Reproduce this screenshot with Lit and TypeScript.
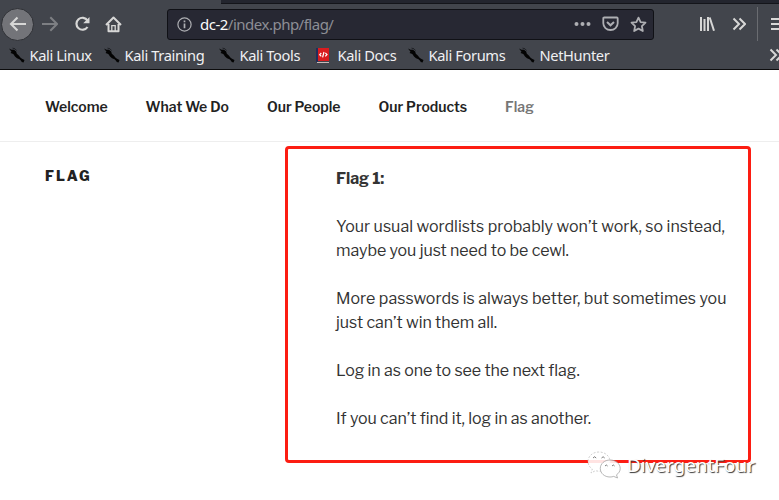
import { LitElement, html, css, svg } from "lit";
import { customElement } from "lit/decorators.js";
import { classMap } from "lit/directives/class-map.js";

const BOOKMARKS = ["Kali Linux", "Kali Training", "Kali Tools", "Kali Docs", "Kali Forums", "NetHunter"];
const PAGES = ["Welcome", "What We Do", "Our People", "Our Products", "Flag"];

const chevrons = svg`<path d="M1.5 2.5 7 8 1.5 13.5M7.5 2.5 13 8 7.5 13.5"/>`;

@customElement("browser-chrome")
class BrowserChrome extends LitElement {
  static styles = css`
    :host { display: flex; flex-direction: column; height: 70px; box-sizing: border-box; background: #42454c; border-bottom: 1px solid #0c0c0d; overflow: hidden; font-family: "Noto Sans", sans-serif; color: #f0f0f2; }
    svg { display: block; fill: none; stroke: #d7d7d6; stroke-width: 2; flex: none; }
    .tabs { height: 4px; margin-left: 221px; box-sizing: border-box; background: #23252e; border-bottom: 1px solid #14151a; flex: none; }
    .bar { display: flex; align-items: center; height: 40px; flex: none; }
    .back { width: 33px; height: 33px; box-sizing: border-box; border-radius: 50%; background: #737479; border: 1px solid #2f3136; display: grid; place-items: center; margin-left: 1px; flex: none; }
    .fwd { margin-left: 8px; opacity: .4; }
    .reload { margin-left: 16px; }
    .home { margin-left: 15px; }
    .url { display: flex; align-items: center; width: 487px; height: 31px; box-sizing: border-box; margin-left: 45px; background: #272833; border: 1px solid #101116; border-radius: 3px; flex: none; padding-left: 9px; }
    .url svg { stroke: #aeafb3; }
    .addr { margin-left: 8px; font-size: 15px; line-height: 20px; color: #8d8e95; flex: 1; white-space: nowrap; letter-spacing: -.5px; }
    .host { color: #fafafa; }
    .dots { margin-right: 11px; }
    .pocket { margin-right: 11px; }
    .star { margin-right: 6px; }
    .lib { margin-left: 45px; }
    .more { margin-left: 17px; }
    .sep { width: 1px; height: 34px; background: #6a6c71; margin-left: 11px; flex: none; }
    .menu { margin-left: 13px; }
    .marks { display: grid; grid-template-columns: 95px 115px 98px 91px 111px 251px 16px; align-items: center; height: 22px; padding-left: 8px; }
    .mark { display: flex; align-items: center; gap: 4px; font-size: 14.67px; line-height: 20px; white-space: nowrap; letter-spacing: -.38px; }
    .mark svg { width: 17px; height: 17px; }
    .mark span { padding-left: .5px; }
  `;
  dragon() {
    return html`<svg viewBox="0 0 17 17"><path d="M1 1.500 3.500 2.800 6 2.800 8.200 4.500 8.800 6.800 10.800 8.600 12.600 10.800 14 11.800 16.500 13 15.500 15.500 13.800 15 12.800 13.500 11.500 12.300 9 11.300 7 9.500 5.300 7 2.500 6 3.500 4.800Z" fill="#030303" stroke="none"/><path d="M4.500 1.100 7 1.800 8.500 3.500" stroke="#1b1d20" stroke-width=".9"/></svg>`;
  }
  docs() {
    return html`<svg viewBox="0 0 17 17"><path d="M0 1h13v13H0z" fill="#d91c1f" stroke="none"/><path d="M0 1h2v14H0z" fill="#222d5b" stroke="none"/><path d="M1 15.500h12" stroke="#c8b9b9" stroke-width="1"/><path d="M5.300 6 3.700 7.700 5.300 9.400M9.300 5.800 11 7.500 9.300 9.300M8 5 6.600 10.300" stroke="#fff" stroke-width="1.200"/></svg>`;
  }
  render() {
    return html`
      <div class="tabs"></div>
      <div class="bar">
        <div class="back"><svg width="18" height="16" viewBox="0 0 18 16"><path d="M17 8H2M8.500 1.500 2 8l6.500 6.500" stroke-width="2.100"/></svg></div>
        <svg class="fwd" width="16" height="16" viewBox="0 0 16 16"><path d="M0 8h14M8.300 1.300 15 8l-6.700 6.700"/></svg>
        <svg class="reload" width="16" height="16" viewBox="0 0 16 16"><path d="M13.500 4.500A6 6 0 1 0 13.500 11" stroke-width="2.200"/><path d="M15.500 1v6.300H9.200Z" fill="#d7d7d6" stroke="none"/></svg>
        <svg class="home" width="17" height="17" viewBox="0 0 17 17"><path d="M1 9 8.500 1.500 16 9M3.500 8v7.300h10V8" stroke-linejoin="round"/><path d="M6.800 15V9.700h3.400V15" stroke-width="1.300"/></svg>
        <div class="url">
          <svg width="15" height="15" viewBox="0 0 15 15"><circle cx="7.500" cy="7.500" r="6.600" stroke-width="1.200"/><path d="M7.500 6.500V11.300M7.500 3.500v1.700" stroke-width="1.700"/></svg>
          <div class="addr"><span class="host">dc-2</span>/index.php/flag/</div>
          <svg class="dots" width="17" height="6" viewBox="0 0 17 6"><g fill="#aeafb3" stroke="none"><circle cx="2.500" cy="3" r="2"/><circle cx="8.500" cy="3" r="2"/><circle cx="14.500" cy="3" r="2"/></g></svg>
          <svg class="pocket" width="17" height="16" viewBox="0 0 17 16"><path d="M2.200 1.500h12.600q.9 0 .9.900v4.900a7.200 6.700 0 0 1-14.400 0V2.400q0-.9.900-.9Z" stroke-width="1.800"/><path d="M5 6l3.500 3.300L12 6" stroke-width="2"/></svg>
          <svg class="star" width="17" height="17" viewBox="0 0 17 17"><path d="m8.500 1.600 2.100 4.500 4.900.6-3.600 3.400.9 4.900-4.300-2.400L4.200 15l.9-4.900-3.600-3.400 4.900-.6Z" stroke-width="1.800" stroke-linejoin="round"/></svg>
        </div>
        <svg class="lib" width="16" height="16" viewBox="0 0 16 16"><path d="M2 1v14M5.500 3v12M9 1v14"/><path d="m10.700 1.500 4.300 13.300"/></svg>
        <svg class="more" width="14" height="16" viewBox="0 0 14 16">${chevrons}</svg>
        <div class="sep"></div>
        <svg class="menu" width="16" height="16" viewBox="0 0 16 16"><path d="M0 3h15M0 8h15M0 13h15"/></svg>
      </div>
      <div class="marks">
        ${BOOKMARKS.map((name) => html`<div class="mark">${name === "Kali Docs" ? this.docs() : this.dragon()}<span>${name}</span></div>`)}
        <svg width="14" height="16" viewBox="0 0 14 16">${chevrons}</svg>
      </div>`;
  }
}

@customElement("app-root")
class AppRoot extends LitElement {
  static styles = css`
    :host { display: block; position: relative; width: 779px; height: 500px; overflow: hidden; background: #fff; font-family: "Libre Franklin", "Liberation Sans", sans-serif; }
    nav { display: flex; gap: 38px; height: 72px; box-sizing: border-box; align-items: center; padding: 2px 0 0 45px; border-bottom: 1px solid #eee; font-size: 14px; font-weight: 600; color: #222; letter-spacing: -.02px; }
    .current { color: #767676; }
    main { display: flex; padding-top: 4px; }
    h2 { margin: 20px 0 0 45px; width: 240px; box-sizing: border-box; font-size: 14px; line-height: 20px; font-weight: 800; letter-spacing: 2.1px; color: #222; flex: none; }
    article { box-sizing: border-box; width: 466px; height: 317px; border: 3px solid #fc1d12; border-radius: 4px; padding: 18px 0 0 48px; font-size: 16px; line-height: 24px; color: #333; white-space: nowrap; }
    p { margin: 0 0 24px; }
    b { font-weight: 700; letter-spacing: -.1px; }
    .wide { letter-spacing: .02px; }
    .tight { letter-spacing: -.06px; }
    .mark { position: absolute; left: 587px; top: 450px; display: flex; align-items: center; gap: 6px; }
    .name { font: 18.900px/28px "Noto Sans", sans-serif; color: #fff; text-shadow: 1px 1px 1px #333; }
    .mark svg { display: block; }
  `;
  render() {
    return html`
      <browser-chrome></browser-chrome>
      <nav>${PAGES.map((p) => html`<span class=${classMap({ current: p === "Flag" })}>${p}</span>`)}</nav>
      <main>
        <h2>FLAG</h2>
        <article>
          <p><b>Flag 1:</b></p>
          <p><span class="wide">Your usual wordlists probably won’t work, so instead,</span><br><span class="tight">maybe you just need to be cewl.</span></p>
          <p><span class="wide">More passwords is always better, but sometimes you</span><br><span class="tight">just can’t win them all.</span></p>
          <p><span class="tight">Log in as one to see the next flag.</span></p>
          <p><span class="tight">If you can’t find it, log in as another.</span></p>
        </article>
      </main>
      <div class="mark">
        <svg width="34" height="30" viewBox="0 0 34 30" fill="#fff" fill-opacity=".88" stroke="#999" stroke-width=".7">
          <path d="M12 2C5.800 2 1 6 1 11.500c0 3.200 1.600 5.800 4.300 7.500L4 23l4.500-2.300c1.100.3 2.300.5 3.500.5 6.200 0 11-4.200 11-9.600S18.200 2 12 2Z" stroke-dasharray="2 1.500" stroke="#bbb"/>
          <path d="M23 10c-5.500 0-9.700 3.700-9.700 8.500S17.500 27 23 27c1.300 0 2.600-.2 3.700-.6L30.500 28l-1-3.200c2.300-1.500 3.700-3.700 3.700-6.300 0-4.800-4.500-8.500-10.200-8.500Z"/>
          <path d="M6 8q1.600-2.500 3.200 0M14.500 8q1.600-2.500 3.200 0M18 16q1.300-2 2.600 0M25 16q1.300-2 2.600 0" fill="none" stroke="#444"/>
        </svg>
        <span class="name">DivergentFour</span>
      </div>`;
  }
}
